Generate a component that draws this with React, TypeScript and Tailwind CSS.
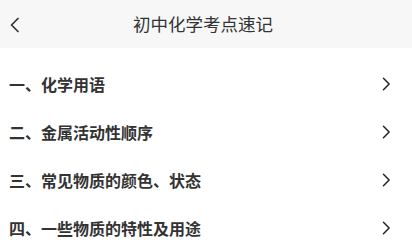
import React from "react";

const items = [
  "一、化学用语",
  "二、金属活动性顺序",
  "三、常见物质的颜色、状态",
  "四、一些物质的特性及用途",
];

const Chevron = ({ dir, className }: { dir: "left" | "right"; className?: string }) => (
  <svg viewBox="0 0 10 16" className={className} fill="none" stroke="currentColor" strokeWidth={1.7} strokeLinecap="round" strokeLinejoin="round">
    {dir === "left" ? <path d="M8.5 1.5 2 8l6.5 6.5" /> : <path d="M1.5 1.5 8 8l-6.5 6.5" />}
  </svg>
);

export default function App() {
  return (
    <div className="w-[412px] h-[250px] bg-white overflow-hidden" style={{ fontFamily: '"Noto Sans CJK SC", "Noto Sans", sans-serif' }}>
      <div className="h-[48px] bg-[#f7f7f7] flex items-center relative">
        <Chevron dir="left" className="absolute left-[9px] top-[17px] w-[11px] h-[16px] text-[#333]" />
        <h1 className="w-full text-center pr-[6px] text-[17.5px] text-[#333] leading-none">初中化学考点速记</h1>
      </div>
      <ul className="pt-[12px]">
        {items.map((t) => (
          <li key={t} className="h-[48px] flex items-center justify-between pl-[9px] pr-[21px]">
            <span className="text-[16px] font-bold text-[#333] leading-none">{t}</span>
            <Chevron dir="right" className="w-[9px] h-[14px] text-[#222]" />
          </li>
        ))}
      </ul>
    </div>
  );
}
